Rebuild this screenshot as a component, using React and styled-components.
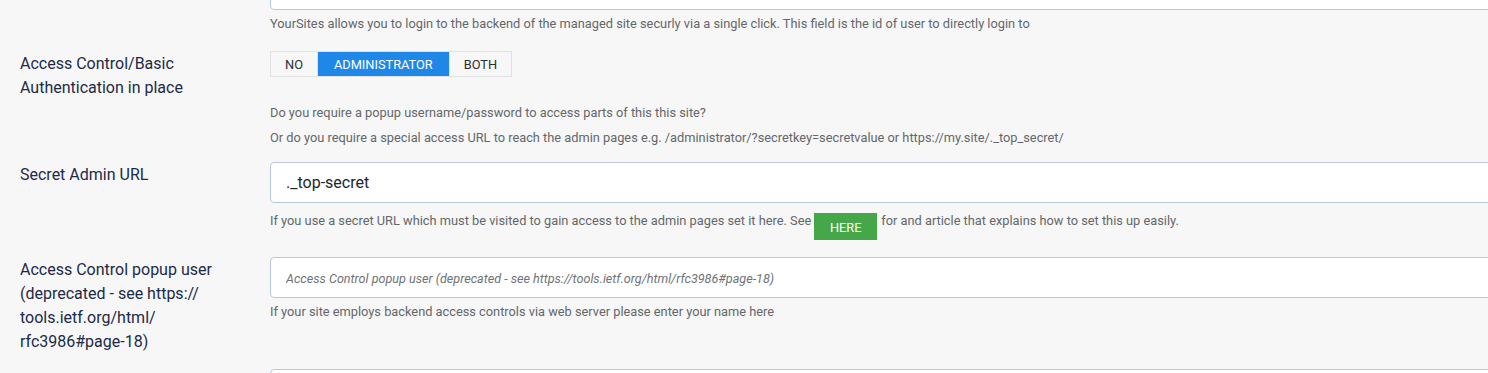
import React from 'react';
import styled, { createGlobalStyle } from 'styled-components';

const Global = createGlobalStyle`
  html, body {
    margin: 0;
    padding: 0;
    background: #f7f7f7;
    overflow: hidden;
  }
  body {
    font-family: Roboto, "Liberation Sans", sans-serif;
  }
`;

const Page = styled.div`
  width: 1600px;
  margin-top: -31px;
  display: flex;
  flex-direction: column;
`;

const Row = styled.div`
  display: grid;
  grid-template-columns: 270px 1fr;
  padding-bottom: ${p => p.$gap ?? 17}px;
`;

const Label = styled.div`
  padding: 1px 20px 0;
  font-size: 16px;
  line-height: 24px;
  color: #1c2a48;
`;

const Control = styled.div`
  display: flex;
  flex-direction: column;
  align-items: flex-start;
`;

const Input = styled.input`
  box-sizing: border-box;
  width: 100%;
  height: 41px;
  padding: 0 15px;
  border: 1px solid #b9c7de;
  border-radius: 4px;
  background: #fff;
  font-family: Roboto, "Liberation Sans", sans-serif;
  font-size: 16px;
  color: #22262a;
  outline: none;

  &::placeholder {
    font-size: 12.6px;
    font-style: italic;
    color: #6f7378;
  }
`;

const Help = styled.div`
  margin-top: ${p => p.$top ?? 4}px;
  font-size: 12.8px;
  line-height: ${p => p.$lh ?? 20}px;
  color: #63676b;
  white-space: nowrap;
`;

const Group = styled.div`
  display: flex;
  height: 26px;
  border: 1px solid #e2e2e2;
  box-sizing: border-box;
`;

const Toggle = styled.button`
  border: none;
  padding: 0 ${p => p.$pad}px;
  height: 100%;
  background: ${p => (p.$active ? '#1f87e8' : '#f7f7f7')};
  color: ${p => (p.$active ? '#ffffff' : '#2b2f33')};
  font-family: Roboto, "Liberation Sans", sans-serif;
  font-size: 12.8px;
  text-transform: uppercase;
  cursor: pointer;
  & + & {
    border-left: 1px solid #e2e2e2;
  }
`;

const HereButton = styled.a`
  display: inline-block;
  width: 63px;
  height: 27px;
  line-height: 29px;
  margin: 0 4px 0 3px;
  vertical-align: -7px;
  text-align: center;
  background: #46a748;
  color: #fff;
  font-size: 12.8px;
  text-transform: uppercase;
  text-decoration: none;
`;

export default function App() {
  return (
    <>
      <Global />
      <Page>
        <Row>
          <Label />
          <Control>
            <Input defaultValue="" />
            <Help>
              YourSites allows you to login to the backend of the managed site securly via a single click. This field is the id of user to directly login to
            </Help>
          </Control>
        </Row>

        <Row $gap={12}>
          <Label>Access Control/Basic Authentication in place</Label>
          <Control>
            <Group>
              <Toggle $pad={14}>No</Toggle>
              <Toggle $pad={16} $active>Administrator</Toggle>
              <Toggle $pad={14}>Both</Toggle>
            </Group>
            <Help $top={23} $lh={25}>
              Do you require a popup username/password to access parts of this this site?
              <br />
              Or do you require a special access URL to reach the admin pages e.g. /administrator/?secretkey=secretvalue or https://my.site/._top_secret/
            </Help>
          </Control>
        </Row>

        <Row $gap={17}>
          <Label>Secret Admin URL</Label>
          <Control>
            <Input defaultValue="._top-secret" />
            <Help $top={8}>
              If you use a secret URL which must be visited to gain access to the admin pages set it here. See
              <HereButton href="#">Here</HereButton>
              for and article that explains how to set this up easily.
            </Help>
          </Control>
        </Row>

        <Row $gap={15}>
          <Label>{'Access Control popup user (deprecated - see https://\u200Btools.ietf.org/html/\u200Brfc3986#page-18)'}</Label>
          <Control>
            <Input placeholder="Access Control popup user (deprecated - see https://tools.ietf.org/html/rfc3986#page-18)" />
            <Help>If your site employs backend access controls via web server please enter your name here</Help>
          </Control>
        </Row>

        <Row>
          <Label />
          <Control>
            <Input />
          </Control>
        </Row>
      </Page>
    </>
  );
}
